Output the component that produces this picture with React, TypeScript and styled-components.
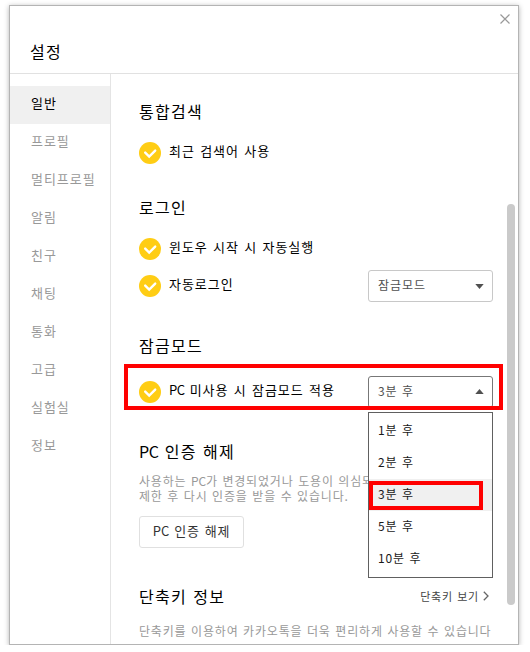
import React from 'react';
import styled, { createGlobalStyle } from 'styled-components';

const GlobalStyle = createGlobalStyle`
  * { box-sizing: border-box; }
  body {
    margin: 0;
    background: #fff;
    font-family: "Noto Sans CJK KR", "Noto Sans", sans-serif;
    font-weight: 400;
    overflow: hidden;
  }
  button, h1, h2, p, ul { margin: 0; padding: 0; font: inherit; }
`;

const Window = styled.div`
  position: relative;
  display: flex;
  flex-direction: column;
  width: 510px;
  height: 640px;
  margin: 5px 0 0 9px;
  background: #fff;
  border: 1px solid #b4b4b4;
  box-shadow: 0 1px 5px rgba(0, 0, 0, 0.3);
`;

const Header = styled.header`
  display: flex;
  justify-content: space-between;
  flex: 0 0 68px;
  padding: 0 8px 0 20px;
  border-bottom: 1px solid #e1e1e1;
`;

const WindowTitle = styled.h1`
  padding-top: 33px;
  font-size: 16px;
  line-height: 24px;
  letter-spacing: 1.2px;
  color: #000;
`;

const CloseButton = styled.button`
  width: 10px;
  height: 10px;
  margin-top: 8px;
  border: 0;
  background: none;
  svg { display: block; }
`;

const Body = styled.div`
  display: flex;
  flex: 1;
  min-height: 0;
`;

const Sidebar = styled.nav`
  flex: 0 0 101px;
  padding-top: 12px;
  border-right: 1px solid #e4e4e4;
`;

const NavItem = styled.div<{ $active?: boolean }>`
  height: 38px;
  padding-left: 21px;
  font-size: 13px;
  line-height: 33px;
  letter-spacing: 0.95px;
  white-space: nowrap;
  color: ${(p) => (p.$active ? '#000' : '#999')};
  background: ${(p) => (p.$active ? '#f0f0f0' : 'transparent')};
`;

const Content = styled.main`
  flex: 1;
  min-width: 0;
  padding: 25px 25px 0 28px;
  overflow: hidden;
`;

const Section = styled.section<{ $gap: number }>`
  margin-bottom: ${(p) => p.$gap}px;
`;

const SectionHead = styled.div<{ $gap: number }>`
  display: flex;
  justify-content: space-between;
  align-items: center;
  height: 24px;
  margin-bottom: ${(p) => p.$gap}px;
`;

const SectionTitle = styled.h2`
  font-size: 16px;
  line-height: 24px;
  letter-spacing: 1.3px;
  word-spacing: 1.4px;
  color: #000;
`;

const Latin = styled.span<{ $tracking: number }>`
  letter-spacing: ${(p) => p.$tracking}px;
`;

const OptionRow = styled.div`
  display: flex;
  align-items: center;
  height: 32px;
  & + & { margin-top: 5px; }
`;

const OptionLabel = styled.span`
  flex: 1;
  margin-left: 8px;
  padding-bottom: 4px;
  font-size: 13px;
  line-height: 20px;
  letter-spacing: 0.95px;
  word-spacing: 1.5px;
  white-space: nowrap;
  color: #000;
`;

const SelectWrap = styled.div`
  position: relative;
  width: 125px;
`;

const SelectBox = styled.div<{ $open?: boolean }>`
  display: flex;
  align-items: center;
  justify-content: space-between;
  height: 32px;
  padding: 0 8px 0 9px;
  border: 1px solid ${(p) => (p.$open ? '#777' : '#c8c8c8')};
  border-radius: 3px;
  background: #fff;
`;

const SelectText = styled.span`
  padding-bottom: 2px;
  font-size: 12px;
  line-height: 18px;
  letter-spacing: 0.95px;
  word-spacing: 0.8px;
  color: #505050;
`;

const Menu = styled.ul`
  position: absolute;
  top: 36px;
  left: 0;
  z-index: 1;
  width: 125px;
  height: 166px;
  padding: 2px 0;
  border: 1px solid #606060;
  background: #fff;
  list-style: none;
`;

const MenuItem = styled.li<{ $selected?: boolean }>`
  position: relative;
  height: 32px;
  padding-left: 9px;
  font-size: 12px;
  line-height: 29px;
  letter-spacing: 0.9px;
  word-spacing: 0.8px;
  color: #1a1a1a;
  background: ${(p) => (p.$selected ? '#f0f0f0' : 'transparent')};
`;

const RowMark = styled.div`
  position: absolute;
  top: 358px;
  left: 114px;
  z-index: 2;
  width: 379px;
  height: 46px;
  border: 4px solid #f00;
  pointer-events: none;
`;

const ItemMark = styled.div`
  position: absolute;
  top: 2px;
  left: 0;
  width: 114px;
  height: 29px;
  border: 4px solid #f00;
`;

const Description = styled.p`
  font-size: 12px;
  line-height: 15px;
  letter-spacing: 0.82px;
  word-spacing: 1.1px;
  white-space: nowrap;
  color: #999;
`;

const OutlineButton = styled.button`
  display: block;
  width: 105px;
  height: 32px;
  margin-top: 13px;
  padding-bottom: 4px;
  border: 1px solid #e0e0e0;
  border-radius: 3px;
  background: #fff;
  font-size: 13px;
  letter-spacing: 0.8px;
  word-spacing: 1.2px;
  color: #333;
`;

const MoreLink = styled.span`
  display: flex;
  align-items: center;
  gap: 4px;
  padding-right: 4px;
  font-size: 11px;
  line-height: 18px;
  letter-spacing: 0.8px;
  word-spacing: 1px;
  color: #444;
`;

const ScrollThumb = styled.div`
  position: absolute;
  top: 198px;
  right: 3px;
  width: 8px;
  height: 401px;
  border-radius: 4px;
  background: #cacaca;
`;

const CheckIcon = () => (
  <svg width="22" height="22" viewBox="0 0 22 22">
    <circle cx="11" cy="11" r="11" fill="#ffcd14" />
    <path d="M6.2 10.6l4 4 6-6" fill="none" stroke="#fff" strokeWidth="2.4" strokeLinecap="round" />
  </svg>
);

const Arrow = ({ up }: { up?: boolean }) => (
  <svg width="9" height="6" viewBox="0 0 9 6">
    <path d={up ? 'M4.5 0L8.7 5H.3z' : 'M.3 1h8.4L4.5 6z'} fill="#505050" />
  </svg>
);

const Option = ({ label, children }: { label: React.ReactNode; children?: React.ReactNode }) => (
  <OptionRow>
    <CheckIcon />
    <OptionLabel>{label}</OptionLabel>
    {children}
  </OptionRow>
);

const categories = ['일반', '프로필', '멀티프로필', '알림', '친구', '채팅', '통화', '고급', '실험실', '정보'];
const delays = ['1분 후', '2분 후', '3분 후', '5분 후', '10분 후'];

export default function App() {
  return (
    <>
      <GlobalStyle />
      <Window>
        <Header>
          <WindowTitle>설정</WindowTitle>
          <CloseButton aria-label="닫기">
            <svg width="10" height="10" viewBox="0 0 10 10">
              <path d="M.5.5l9 9M9.5.5l-9 9" stroke="#999" strokeWidth="1.2" />
            </svg>
          </CloseButton>
        </Header>
        <Body>
          <Sidebar>
            {categories.map((name, i) => (
              <NavItem key={name} $active={i === 0}>{name}</NavItem>
            ))}
          </Sidebar>
          <Content>
            <Section $gap={26}>
              <SectionHead $gap={14}><SectionTitle>통합검색</SectionTitle></SectionHead>
              <Option label="최근 검색어 사용" />
            </Section>
            <Section $gap={31}>
              <SectionHead $gap={14}><SectionTitle>로그인</SectionTitle></SectionHead>
              <Option label="윈도우 시작 시 자동실행" />
              <Option label="자동로그인">
                <SelectWrap>
                  <SelectBox><SelectText>잠금모드</SelectText><Arrow /></SelectBox>
                </SelectWrap>
              </Option>
            </Section>
            <Section $gap={31}>
              <SectionHead $gap={19}><SectionTitle>잠금모드</SectionTitle></SectionHead>
              <Option label={<><Latin $tracking={-0.6}>PC</Latin> 미사용 시 잠금모드 적용</>}>
                <SelectWrap>
                  <SelectBox $open><SelectText>3분 후</SelectText><Arrow up /></SelectBox>
                  <Menu>
                    {delays.map((delay) => (
                      <MenuItem key={delay} $selected={delay === '3분 후'}>
                        {delay}
                        {delay === '3분 후' && <ItemMark />}
                      </MenuItem>
                    ))}
                  </Menu>
                </SelectWrap>
              </Option>
            </Section>
            <Section $gap={36}>
              <SectionHead $gap={10}>
                <SectionTitle><Latin $tracking={-0.5}>PC</Latin> 인증 해제</SectionTitle>
              </SectionHead>
              <Description>
                사용하는 <Latin $tracking={-0.2}>PC</Latin>가 변경되었거나 도용이 의심되는 경우<br />
                제한 후 다시 인증을 받을 수 있습니다.
              </Description>
              <OutlineButton><Latin $tracking={0}>PC</Latin> 인증 해제</OutlineButton>
            </Section>
            <Section $gap={0}>
              <SectionHead $gap={15}>
                <SectionTitle>단축키 정보</SectionTitle>
                <MoreLink>
                  단축키 보기
                  <svg width="6" height="10" viewBox="0 0 6 10">
                    <path d="M.8.8L5 5 .8 9.2" fill="none" stroke="#666" strokeWidth="1.3" />
                  </svg>
                </MoreLink>
              </SectionHead>
              <Description>단축키를 이용하여 카카오톡을 더욱 편리하게 사용할 수 있습니다</Description>
            </Section>
          </Content>
        </Body>
        <ScrollThumb />
        <RowMark />
      </Window>
    </>
  );
}
